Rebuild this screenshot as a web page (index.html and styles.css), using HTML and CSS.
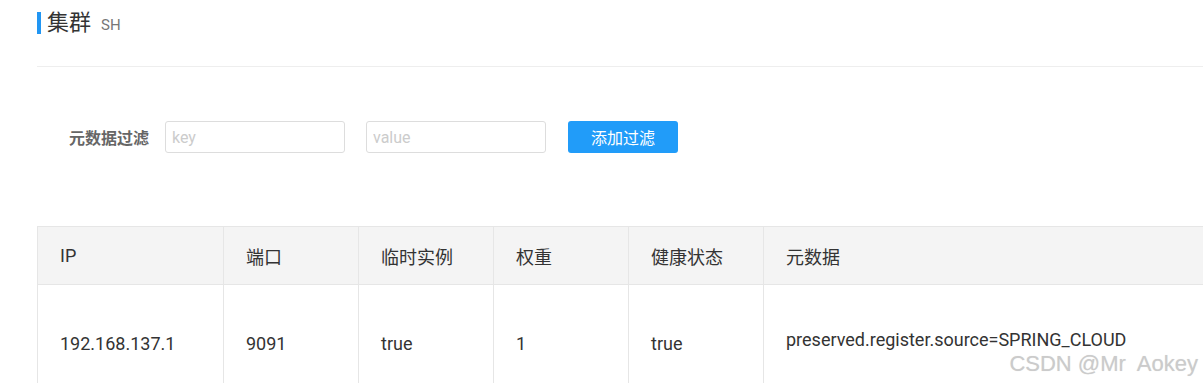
FILE: index.html
```html
<!DOCTYPE html>
<html lang="zh-CN">
<head>
    <meta charset="UTF-8">
    <meta name="viewport" content="width=device-width, initial-scale=1.0">
    <title>集群 SH</title>
    <link rel="stylesheet" href="styles.css">
</head>
<body>
    <div class="page">
        <div class="title-row">
            <span class="title-bar"></span>
            <h2 class="title">集群</h2>
            <span class="subtitle">SH</span>
        </div>
        <div class="divider"></div>

        <div class="filter-row">
            <label class="filter-label">元数据过滤</label>
            <input type="text" class="input-field" placeholder="key">
            <input type="text" class="input-field" placeholder="value">
            <button class="button button-blue">添加过滤</button>
        </div>

        <table class="instance-table">
            <colgroup>
                <col class="col-ip">
                <col class="col-sm">
                <col class="col-sm">
                <col class="col-sm">
                <col class="col-sm">
                <col class="col-meta">
            </colgroup>
            <thead>
                <tr>
                    <th>IP</th>
                    <th>端口</th>
                    <th>临时实例</th>
                    <th>权重</th>
                    <th>健康状态</th>
                    <th>元数据</th>
                </tr>
            </thead>
            <tbody>
                <tr>
                    <td>192.168.137.1</td>
                    <td>9091</td>
                    <td>true</td>
                    <td>1</td>
                    <td>true</td>
                    <td><div class="meta">preserved.register.source=SPRING_CLOUD</div></td>
                </tr>
            </tbody>
        </table>
    </div>
    <div class="watermark">CSDN @Mr&nbsp; Aokey</div>
</body>
</html>
```

FILE: styles.css
```css
/* General styling */
body {
    margin: 0;
    font-family: Roboto, "Noto Sans CJK SC", sans-serif;
    color: #333;
    background-color: #fff;
    overflow: hidden;
}
.page {
    padding-left: 37px;
    padding-top: 12px;
}

/* Title */
.title-row {
    display: flex;
    align-items: center;
    height: 22px;
}
.title-bar {
    width: 4px;
    height: 22px;
    background-color: #2196f3;
    margin-right: 6px;
}
.title {
    margin: 0;
    font-size: 22px;
    font-weight: normal;
    line-height: 22px;
    color: #333;
}
.subtitle {
    font-size: 15px;
    color: #777;
    margin-left: 10px;
    margin-top: 4px;
}
.divider {
    height: 1px;
    background-color: #eee;
    margin-top: 32px;
}

/* Filter */
.filter-row {
    display: flex;
    align-items: center;
    margin-top: 54px;
    padding-left: 32px;
    height: 32px;
}
.filter-label {
    font-size: 16px;
    font-weight: bold;
    color: #666;
    margin-right: 16px;
}
.input-field {
    box-sizing: border-box;
    width: 180px;
    height: 32px;
    padding: 0 6px;
    margin-right: 21px;
    border: 1px solid #ddd;
    border-radius: 3px;
    font-family: Roboto, sans-serif;
    font-size: 16px;
    color: #333;
}
.input-field::placeholder {
    color: #ccc;
}
.button {
    width: 110px;
    height: 32px;
    margin-left: 1px;
    border: none;
    border-radius: 3px;
    color: white;
    font-family: "Noto Sans CJK SC", sans-serif;
    font-size: 16px;
    cursor: pointer;
}
.button-blue {
    background-color: #219cf9;
}

/* Table */
.instance-table {
    margin-top: 73px;
    border-collapse: collapse;
    table-layout: fixed;
    width: 1366px;
    font-size: 18px;
}
.col-ip {
    width: 186px;
}
.col-sm {
    width: 135px;
}
.col-meta {
    width: 640px;
}
.instance-table th,
.instance-table td {
    border: 1px solid #e6e6e6;
    padding: 0 0 0 22px;
    text-align: left;
    font-weight: normal;
    white-space: nowrap;
}
.instance-table th {
    height: 57px;
    background-color: #f4f4f4;
}
.instance-table td {
    height: 117px;
}
.meta {
    margin-bottom: 8px;
}

.watermark {
    position: absolute;
    right: 5px;
    bottom: 6px;
    font-family: "Liberation Sans", Arial, sans-serif;
    font-size: 22px;
    color: #cbcbcb;
    text-shadow: 0 0 1px #e0e0e0;
}
```
